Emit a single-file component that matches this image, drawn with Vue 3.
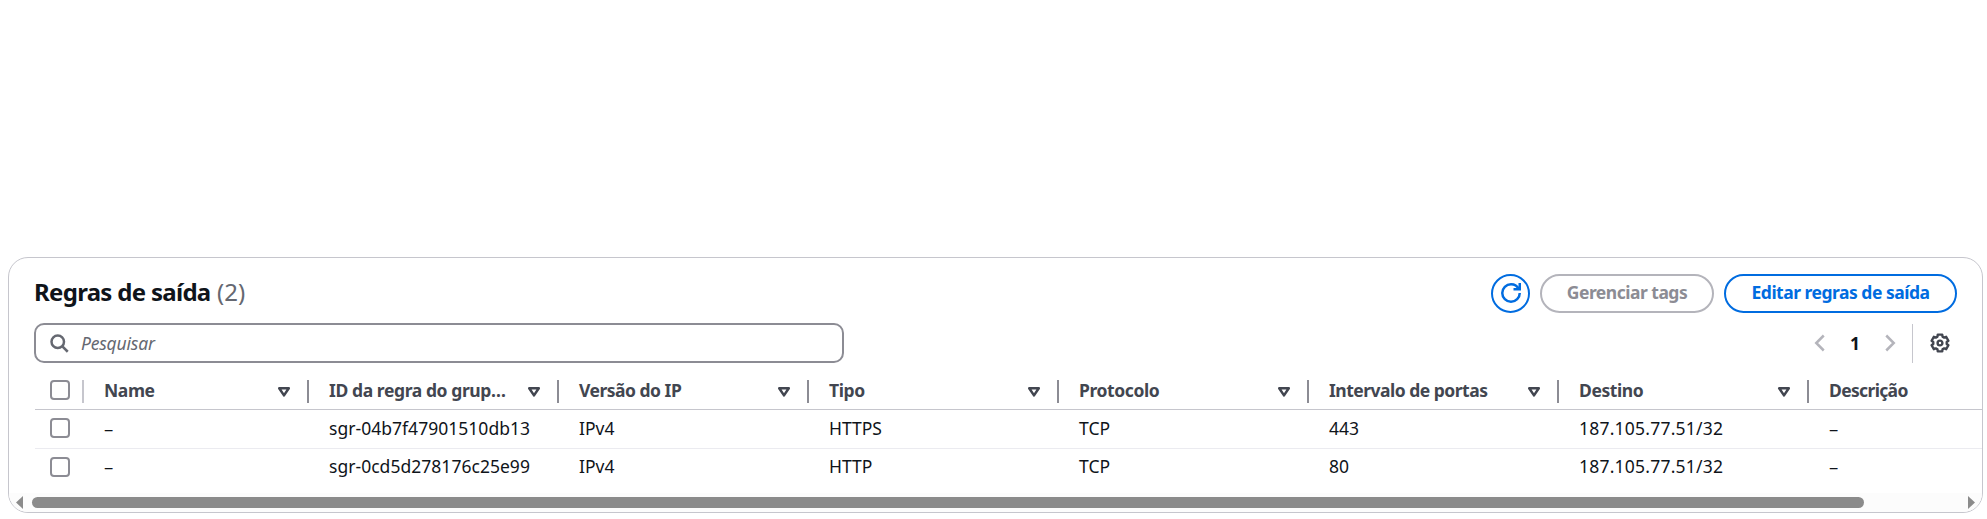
<script setup>
const columns = [
  { label: 'Name', key: 'name', cls: 'w-name' },
  { label: 'ID da regra do grup…', key: 'id', cls: 'w-id' },
  { label: 'Versão do IP', key: 'ip', cls: 'w-ip' },
  { label: 'Tipo', key: 'type', cls: 'w-type' },
  { label: 'Protocolo', key: 'protocol', cls: 'w-protocol' },
  { label: 'Intervalo de portas', key: 'ports', cls: 'w-ports' },
  { label: 'Destino', key: 'target', cls: 'w-target' },
  { label: 'Descrição', key: 'description', cls: 'w-description' },
]
const rows = [
  { name: '–', id: 'sgr-04b7f47901510db13', ip: 'IPv4', type: 'HTTPS', protocol: 'TCP', ports: '443', target: '187.105.77.51/32', description: '–' },
  { name: '–', id: 'sgr-0cd5d278176c25e99', ip: 'IPv4', type: 'HTTP', protocol: 'TCP', ports: '80', target: '187.105.77.51/32', description: '–' },
]
</script>

<template>
  <main class="page">
    <section class="card">
      <header class="head">
        <h2 class="title">Regras de saída <span class="count">(2)</span></h2>
        <div class="actions">
          <button class="btn round" aria-label="Atualizar">
            <svg width="20" height="20" viewBox="0 0 16 16" fill="none" stroke="currentColor" stroke-width="2">
              <path d="M15 8c0 3.87-3.13 7-7 7s-7-3.13-7-7 3.13-7 7-7c2.79 0 5.2 1.63 6.33 4" />
              <path d="M10 5h5V0" />
            </svg>
          </button>
          <button class="btn tags" disabled><span>Gerenciar tags</span></button>
          <button class="btn edit"><span>Editar regras de saída</span></button>
        </div>
      </header>

      <div class="tools">
        <div class="search">
          <svg width="20" height="20" viewBox="0 0 16 16" fill="none" stroke="currentColor" stroke-width="2">
            <circle cx="7" cy="7" r="5" />
            <path d="m15 15-4.5-4.5" />
          </svg>
          <span class="placeholder">Pesquisar</span>
        </div>
        <div class="pager">
          <svg class="arrow" width="20" height="20" viewBox="0 0 16 16" fill="none" stroke="currentColor" stroke-width="2"><path d="M11 2 5 8l6 6" /></svg>
          <span class="num">1</span>
          <svg class="arrow" width="20" height="20" viewBox="0 0 16 16" fill="none" stroke="currentColor" stroke-width="2"><path d="m5 2 6 6-6 6" /></svg>
          <span class="rule"></span>
          <svg class="gear" width="20" height="20" viewBox="0 0 20 20" fill="none" stroke="currentColor" stroke-width="2.4" stroke-linejoin="round">
            <path d="M16.73 10.95 18.4 12.25 16.15 16.15 14.19 15.36 12.55 16.3 12.25 18.4H7.75L7.45 16.3 5.81 15.36 3.85 16.15 1.6 12.25 3.27 10.95V9.05L1.6 7.75 3.85 3.85 5.81 4.64 7.45 3.7 7.75 1.6H12.25L12.55 3.7 14.19 4.64 16.15 3.85 18.4 7.75 16.73 9.05Z" />
            <circle cx="10" cy="10" r="2.4" />
          </svg>
        </div>
      </div>

      <div class="table">
        <div class="row header">
          <div class="check"><i class="box"></i></div>
          <div v-for="c in columns" :key="c.key" class="cell" :class="c.cls">
            <span class="label">{{ c.label }}</span>
            <svg v-if="c.key !== 'description'" class="sort" width="14" height="12" viewBox="0 0 14 12" fill="none" stroke="currentColor" stroke-width="2.5" stroke-linejoin="round">
              <path d="M2.2 2.2h9.6L7 9.4Z" />
            </svg>
          </div>
        </div>
        <div v-for="r in rows" :key="r.id" class="row body">
          <div class="check"><i class="box"></i></div>
          <div v-for="c in columns" :key="c.key" class="cell" :class="c.cls"><span class="label">{{ r[c.key] }}</span></div>
        </div>
      </div>

      <div class="scroll">
        <svg class="tip" width="7" height="13" viewBox="0 0 7 13"><path d="M7 0v13L0 6.5Z" fill="#8b8b8b" /></svg>
        <div class="thumb"></div>
        <svg class="tip end" width="7" height="13" viewBox="0 0 7 13"><path d="M0 0v13l7-6.5Z" fill="#8b8b8b" /></svg>
      </div>
    </section>
  </main>
</template>

<style>
body { background: #fff; }
</style>

<style scoped>
* { box-sizing: border-box; }
.page {
  height: 519px;
  padding: 257px 4px 6px 8px;
  overflow: hidden;
  font-family: "Noto Sans", "Open Sans", sans-serif;
  font-size: 17.5px;
  color: #0f141a;
}
.card {
  height: 256px;
  border: 1px solid #c6c6cd;
  border-radius: 20px;
  overflow: hidden;
  display: flex;
  flex-direction: column;
}
.head {
  height: 65px;
  padding: 16px 25px 0 25px;
  display: flex;
  justify-content: space-between;
  align-items: flex-start;
}
.title {
  margin: 0;
  font-size: 24px;
  font-weight: 700;
  line-height: 36px;
  letter-spacing: -0.7px;
  white-space: nowrap;
}
.count { font-weight: 400; color: #656871; letter-spacing: 0; margin-left: 1px; }
.actions { display: flex; gap: 10px; }
.btn {
  height: 39px;
  padding: 0;
  border: 2px solid #006ce0;
  border-radius: 20px;
  background: #fff;
  color: #006ce0;
  font: inherit;
  font-weight: 700;
  line-height: 34px;
  display: flex;
  align-items: center;
  justify-content: center;
  white-space: nowrap;
}
.btn span { margin-top: -3px; }
.round { width: 39px; }
.round svg { margin-top: -2px; }
.tags { width: 174px; border-color: #b4b4bb; color: #8c8c94; letter-spacing: -0.5px; }
.edit { width: 233px; letter-spacing: -0.5px; }
.tools {
  height: 40px;
  padding: 0 25px 0 25px;
  display: flex;
  justify-content: space-between;
}
.search {
  width: 810px;
  height: 40px;
  border: 2px solid #8c8c94;
  border-radius: 10px;
  padding-left: 13px;
  display: flex;
  align-items: center;
  gap: 12px;
  color: #656871;
}
.placeholder { font-style: italic; line-height: 34px; letter-spacing: -0.2px; }
.pager { display: flex; align-items: center; padding-right: 7px; }
.arrow { color: #b4b4bb; }
.num { width: 50px; text-align: center; font-weight: 700; line-height: 38px; }
.rule { width: 1px; height: 39px; background: #c6c6cd; margin: 0 17px 0 12px; }
.gear { color: #424650; }
.table { height: 130px; padding: 9px 0 0 26px; }
.row { display: flex; height: 38px; width: max-content; min-width: 100%; }
.header { border-bottom: 1px solid #c6c6cd; color: #424650; font-weight: 700; }
.body + .body { height: 39px; border-top: 1px solid #ebebf0; }
.check { width: 49px; padding: 8px 0 0 15px; position: relative; flex: none; }
.header .check::after {
  content: "";
  position: absolute;
  right: 0;
  top: 8px;
  width: 2px;
  height: 23px;
  background: #c6c6cd;
}
.box {
  display: block;
  width: 20px;
  height: 20px;
  border: 2px solid #8c8c94;
  border-radius: 4px;
}
.cell {
  width: 250px;
  flex: none;
  padding: 0 19px 0 20px;
  position: relative;
  display: flex;
  justify-content: space-between;
  align-items: flex-start;
  white-space: nowrap;
}
.w-name { width: 225px; }
.w-description { width: 173px; padding-right: 0; }
.label { line-height: 37px; }
.body + .body .label { line-height: 35px; }
.body .w-id .label { letter-spacing: 0.03px; }
.body .w-target .label { letter-spacing: 0.22px; }
.body .w-name .label, .body .w-description .label { font-size: 18.5px; }
.header .label { letter-spacing: -0.4px; }
.header .w-ports .label, .header .w-ip .label { letter-spacing: -0.5px; }
.header .w-description .label { letter-spacing: -0.65px; }
.header .cell:not(.w-description)::after {
  content: "";
  position: absolute;
  right: 0;
  top: 8px;
  width: 2px;
  height: 23px;
  background: #8c8c94;
}
.sort { margin-top: 14px; margin-right: -1px; }
.scroll {
  height: 19px;
  background: #fcfcfc;
  display: flex;
  align-items: center;
  padding: 0 7px;
}
.thumb { width: 1832px; height: 11px; border-radius: 6px; background: #8b8b8b; margin-left: 9px; }
.end { margin-left: auto; }
</style>
